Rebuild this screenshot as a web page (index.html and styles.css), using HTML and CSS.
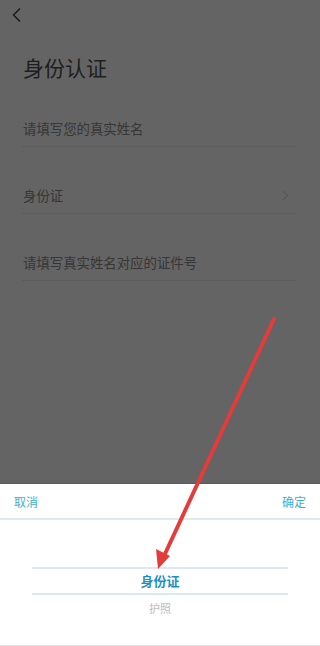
FILE: index.html
```html
<!DOCTYPE html>
<html lang="zh-CN">

<head>
  <meta charset="UTF-8" />
  <meta name="viewport" content="width=device-width, initial-scale=1.0" />
  <title>身份认证</title>
  <link rel="stylesheet" href="styles.css">
</head>

<body>
  <div class="page">
    <!-- Top bar -->
    <div class="topbar">
      <svg class="back" width="12" height="16" viewBox="0 0 12 16">
        <polyline points="9,1.5 2.5,8 9,14.5" fill="none" stroke="#1c1c1c" stroke-width="1.5" />
      </svg>
    </div>

    <h1 class="title">身份认证</h1>

    <div class="row">请填写您的真实姓名</div>
    <div class="row row-select">
      <span>身份证</span>
      <svg class="more" width="7" height="11" viewBox="0 0 7 11">
        <polyline points="1,1 5.5,5.5 1,10" fill="none" stroke="#575757" stroke-width="1.2" />
      </svg>
    </div>
    <div class="row">请填写真实姓名对应的证件号</div>
  </div>

  <!-- Picker sheet -->
  <div class="sheet">
    <div class="sheet-head">
      <span class="sheet-btn">取消</span>
      <span class="sheet-btn">确定</span>
    </div>
    <div class="picker">
      <div class="picker-item picker-active">身份证</div>
      <div class="picker-item">护照</div>
    </div>
  </div>

  <!-- Annotation arrow -->
  <svg class="arrow" width="320" height="646" viewBox="0 0 320 646">
    <line x1="274" y1="319" x2="164" y2="556" stroke="#e43b3b" stroke-width="4" stroke-linecap="round" />
    <polygon points="158,569 156,549 170,556" fill="#e43b3b" />
  </svg>
</body>

</html>
```

FILE: styles.css
```css
body {
  font-family: "Noto Sans CJK SC", "Noto Sans", sans-serif;
  background-color: #646464;
  margin: 0;
  padding: 0;
  width: 320px;
  height: 646px;
  overflow: hidden;
}

.page {
  height: 483px;
}

.topbar {
  height: 30px;
  display: flex;
  align-items: center;
  padding-left: 11px;
}

.back {
  display: block;
  margin-top: -1px;
}

.title {
  margin: 25px 0 1px 23px;
  font-size: 21px;
  line-height: 24px;
  font-weight: normal;
  color: #1e1e1e;
}

.row {
  margin: 0 23px 0 22px;
  padding: 40px 0 10px 1px;
  font-size: 13.4px;
  line-height: 16px;
  color: #363636;
  border-bottom: 1px solid #5c5c5c;
}

.row-select {
  display: flex;
  justify-content: space-between;
  align-items: center;
}

.more {
  display: block;
  margin-right: 8px;
}

.sheet {
  position: fixed;
  left: 0;
  right: 0;
  bottom: 0;
  height: 163px;
  background: white;
  border-top: 1px solid #5a5a5a;
  box-sizing: border-box;
  border-bottom: 1px solid #e6e6e6;
}

.sheet-head {
  display: flex;
  justify-content: space-between;
  align-items: center;
  height: 34px;
  padding: 0 14px;
  border-bottom: 2px solid #dcecef;
}

.sheet-btn {
  font-size: 12px;
  color: #3fb0cc;
}

.picker {
  padding-top: 47px;
  margin: 0 32px;
  text-align: center;
}

.picker-item {
  height: 26px;
  line-height: 26px;
  font-size: 11px;
  color: #bdbdbd;
}

.picker-active {
  font-size: 13px;
  color: #1f8fbe;
  font-weight: bold;
  border-top: 2px solid #d6eaef;
  border-bottom: 2px solid #d6eaef;
  height: 24px;
  line-height: 24px;
}

.arrow {
  position: fixed;
  left: 0;
  top: 0;
  pointer-events: none;
}
```
